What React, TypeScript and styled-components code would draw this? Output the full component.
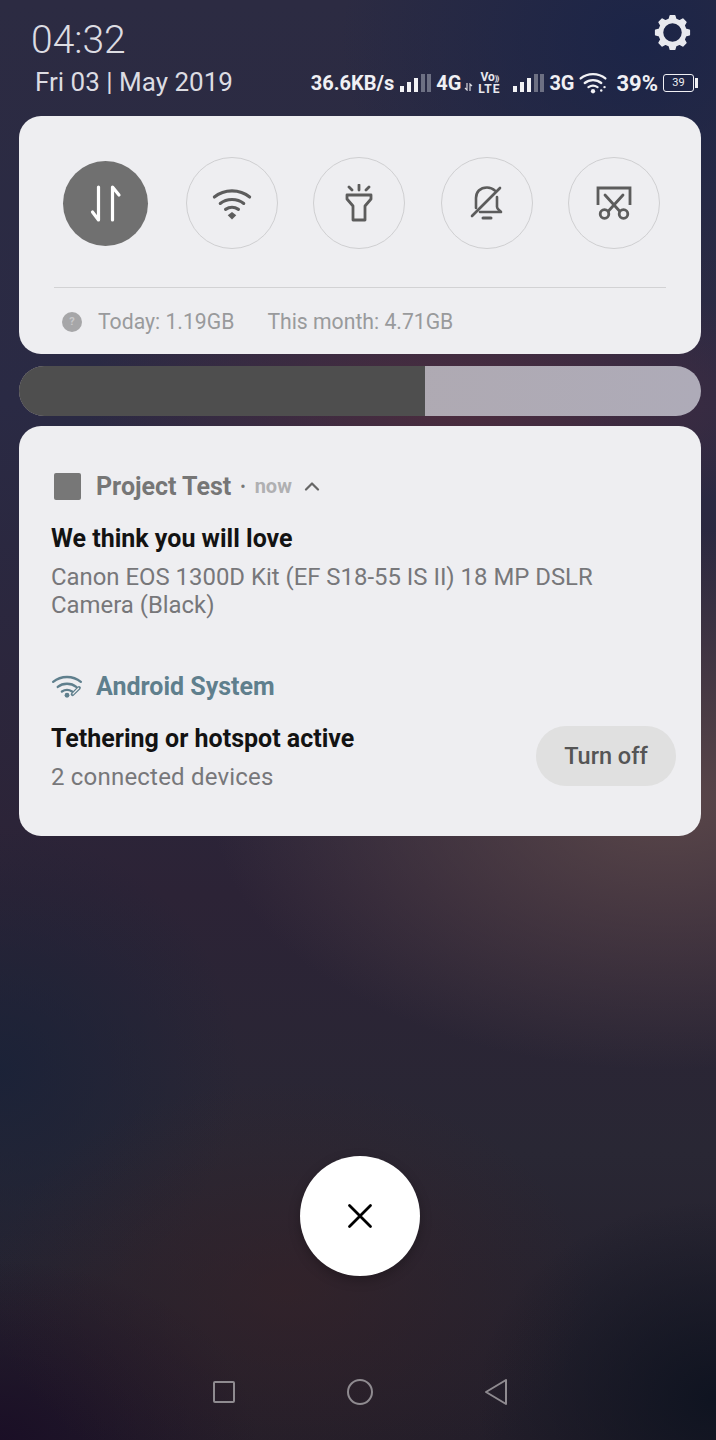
import styled, { createGlobalStyle } from 'styled-components';

const GlobalStyle = createGlobalStyle`
  html, body {
    margin: 0;
    padding: 0;
    background: #23233a;
  }
  * {
    box-sizing: border-box;
  }
`;

// eight teeth round a centre of 12,12, in the gear's 24 unit box
const gearOutline = Array.from({ length: 8 }, (_, i) => {
  const centre = (i * Math.PI) / 4;
  const point = (radius: number, offset: number) => {
    const angle = centre + offset;
    return `${(12 + radius * Math.cos(angle)).toFixed(2)} ${(12 + radius * Math.sin(angle)).toFixed(2)}`;
  };
  return `${point(8.8, -0.24)}L${point(11, -0.13)}L${point(11, 0.13)}L${point(8.8, 0.24)}`;
}).join('L');

const gearPath = `M${gearOutline}ZM12 5.5a6.5 6.5 0 1 0 0 13 6.5 6.5 0 0 0 0-13Z`;

const SignalBars = () => (
  <svg width="32" height="20" viewBox="0 0 32 20">
    <rect x="1" y="13" width="4" height="6" fill="#f2f2f5" />
    <rect x="8" y="9" width="4" height="10" fill="#f2f2f5" />
    <rect x="15" y="5" width="4" height="14" fill="#f2f2f5" />
    <rect x="22" y="1" width="4" height="18" fill="#6d7083" />
    <rect x="28" y="1" width="4" height="18" fill="#6d7083" />
  </svg>
);

const WifiArcs = ({ color, width }: { color: string; width: number }) => (
  <>
    <path d="M2 8.5C10.5 1.5 23.5 1.5 32 8.5" fill="none" stroke={color} strokeWidth={width} strokeLinecap="round" />
    <path d="M7 14C12.5 9.5 21.5 9.5 27 14" fill="none" stroke={color} strokeWidth={width} strokeLinecap="round" />
    <path d="M11.5 19C14.8 16.8 19.2 16.8 22.5 19" fill="none" stroke={color} strokeWidth={width} strokeLinecap="round" />
  </>
);

const App = () => {
  const toggles = [
    <svg key="wifi" width="40" height="33" viewBox="0 0 34 28">
      <WifiArcs color="#5c5c5c" width={2.6} />
      <path d="M17 27.5l-3.6-3.6 3.6-2.6 3.6 2.6z" fill="#5c5c5c" />
    </svg>,
    <svg key="torch" width="30" height="38" viewBox="0 0 30 38" fill="none" stroke="#5c5c5c" strokeWidth="2.8" strokeLinecap="round" strokeLinejoin="round">
      <path d="M15 1v5M5 3l3 3M25 3l-3 3" />
      <path d="M3 11h24v4l-6 7v14H9V22l-6-7z" />
    </svg>,
    <svg key="bell" width="34" height="36" viewBox="0 0 34 36" fill="none" stroke="#5c5c5c" strokeWidth="2.6" strokeLinecap="round" strokeLinejoin="round">
      <path d="M6 23V13C6 7 10 2.5 17 2.5c3.5 0 6 1.2 8 3.2M27 12v10c0 2 2 3 4 5H10" />
      <path d="M2 31L30 3" />
      <path d="M13 33h8" strokeWidth="3" />
    </svg>,
    <svg key="cut" width="36" height="34" viewBox="0 0 36 34" fill="none" stroke="#5c5c5c" strokeWidth="2.8" strokeLinecap="round">
      <path d="M2 19V2h32v17" strokeLinecap="butt" />
      <path d="M9 9l14.5 16M27 9L12.5 25" />
      <circle cx="8.5" cy="28" r="4.3" />
      <circle cx="27.5" cy="28" r="4.3" />
    </svg>,
  ];

  return (
    <Screen>
      <GlobalStyle />
      <Header>
        <ClockColumn>
          <Clock>04:32</Clock>
          <DateLine>Fri 03 | May 2019</DateLine>
        </ClockColumn>
        <HeaderRight>
          <SettingsIcon viewBox="0 0 24 24" width="37" height="37">
            <path fill="#e8e9ee" stroke="#e8e9ee" strokeWidth="1" strokeLinejoin="round" fillRule="evenodd" d={gearPath} />
          </SettingsIcon>
          <StatusBar>
            <StatusText>36.6KB/s</StatusText>
            <SignalBars />
            <StatusText>4G</StatusText>
            <TinyArrows width="9" height="8" viewBox="0 0 9 8" fill="none" stroke="#d8d8de" strokeWidth="1.2">
              <path d="M3 0v7L1 5M6 8V1l2 2" />
            </TinyArrows>
            <VoLte>
              <VoLine>
                Vo<VoWaves>))</VoWaves>
              </VoLine>
              <LteLine>LTE</LteLine>
            </VoLte>
            <SignalBars />
            <StatusText>3G</StatusText>
            <svg width="28" height="24" viewBox="0 0 34 28">
              <WifiArcs color="#f2f2f5" width={2.8} />
              <circle cx="17" cy="24" r="2.6" fill="#f2f2f5" />
              <circle cx="27" cy="23" r="1.5" fill="#f2f2f5" />
              <circle cx="31" cy="19" r="1.5" fill="#f2f2f5" />
            </svg>
            <Percent>39%</Percent>
            <Battery>
              <BatteryBody>39</BatteryBody>
              <BatteryCap />
            </Battery>
          </StatusBar>
        </HeaderRight>
      </Header>

      <TogglesPanel>
        <ToggleRow>
          <ActiveToggle>
            <svg width="32" height="38" viewBox="0 0 32 38" fill="none" stroke="#fff" strokeWidth="3.2" strokeLinecap="round" strokeLinejoin="round">
              <path d="M8.5 3v33l-6-8" />
              <path d="M22.5 36V3l6.5 8" />
            </svg>
          </ActiveToggle>
          {toggles.map((icon) => (
            <Toggle key={icon.key}>{icon}</Toggle>
          ))}
        </ToggleRow>
        <Divider />
        <UsageRow>
          <HelpDot>?</HelpDot>
          <UsageText>Today: 1.19GB</UsageText>
          <UsageText>This month: 4.71GB</UsageText>
        </UsageRow>
      </TogglesPanel>

      <Brightness>
        <BrightnessFill style={{ width: `${(406 / 682) * 100}%` }} />
      </Brightness>

      <NotificationPanel>
        <AppRow>
          <AppSquare />
          <AppName>Project Test</AppName>
          <Dot>•</Dot>
          <When>now</When>
          <svg width="16" height="10" viewBox="0 0 16 10" fill="none" stroke="#666" strokeWidth="2.2" strokeLinecap="round" strokeLinejoin="round">
            <path d="M2 8.5l6-6 6 6" />
          </svg>
        </AppRow>
        <LoveTitle>We think you will love</LoveTitle>
        <NotifBody>Canon EOS 1300D Kit (EF S18-55 IS II) 18 MP DSLR Camera (Black)</NotifBody>

        <SystemRow>
          <svg width="32" height="24" viewBox="0 0 34 26">
            <WifiArcs color="#5f7f8d" width={2.6} />
            <circle cx="17" cy="23" r="2.6" fill="#5f7f8d" />
            <path d="M23 22l7-7" stroke="#5f7f8d" strokeWidth="4" strokeLinecap="round" />
            <path d="M23.5 21.5l6-6" stroke="#eeeef0" strokeWidth="1.4" strokeLinecap="round" />
          </svg>
          <SystemName>Android System</SystemName>
        </SystemRow>
        <TetherRow>
          <div>
            <NotifTitle>Tethering or hotspot active</NotifTitle>
            <TetherBody>2 connected devices</TetherBody>
          </div>
          <TurnOff>Turn off</TurnOff>
        </TetherRow>
      </NotificationPanel>

      <CloseButton>
        <svg width="26" height="26" viewBox="0 0 26 26" fill="none" stroke="#000" strokeWidth="2.8" strokeLinecap="round">
          <path d="M2.5 2.5l21 21M23.5 2.5l-21 21" />
        </svg>
      </CloseButton>

      <NavBar>
        <svg width="22" height="22" viewBox="0 0 22 22" fill="none" stroke="#8f8b90" strokeWidth="2">
          <rect x="1" y="1" width="20" height="20" rx="1" />
        </svg>
        <svg width="26" height="26" viewBox="0 0 26 26" fill="none" stroke="#8f8b90" strokeWidth="2">
          <circle cx="13" cy="13" r="12" />
        </svg>
        <svg width="22" height="26" viewBox="0 0 22 26" fill="none" stroke="#8f8b90" strokeWidth="2" strokeLinejoin="round">
          <path d="M21 1v24L1 13z" />
        </svg>
      </NavBar>
    </Screen>
  );
};

const Screen = styled.div`
  width: 716px;
  height: 1440px;
  padding-left: 4px;
  overflow: hidden;
  display: flex;
  flex-direction: column;
  align-items: center;
  font-family: Roboto, "Liberation Sans", sans-serif;
  background:
    radial-gradient(ellipse 460px 270px at 670px 800px, rgba(92, 72, 74, 0.95), rgba(80, 52, 60, 0) 100%),
    radial-gradient(ellipse 300px 210px at 290px 1290px, rgba(58, 34, 38, 0.55), rgba(58, 34, 38, 0) 100%),
    radial-gradient(ellipse 240px 200px at 716px 1400px, rgba(14, 19, 32, 0.95), rgba(14, 19, 32, 0) 100%),
    radial-gradient(ellipse 260px 180px at 0 1440px, rgba(26, 14, 38, 0.95), rgba(26, 14, 38, 0) 100%),
    radial-gradient(ellipse 240px 240px at 0 1070px, rgba(26, 34, 56, 0.9), rgba(26, 34, 56, 0) 100%),
    radial-gradient(ellipse 380px 130px at 460px 400px, rgba(90, 45, 60, 0.75), rgba(90, 45, 60, 0) 100%),
    radial-gradient(ellipse 300px 260px at 640px 40px, rgba(26, 36, 72, 0.9), rgba(26, 36, 72, 0) 100%),
    linear-gradient(180deg, #2c2b42 0%, #2a2a44 28%, #2c2336 62%, #292734 80%, #231e2a 100%);
`;

const Header = styled.header`
  width: 100%;
  height: 116px;
  display: flex;
  justify-content: space-between;
  align-items: flex-start;
  padding: 18px 19px 0 27px;
`;

const ClockColumn = styled.div`
  display: flex;
  flex-direction: column;
`;

const Clock = styled.div`
  font-size: 39px;
  font-weight: 300;
  line-height: 44px;
  color: #dcdce2;
`;

const DateLine = styled.div`
  margin: 4px 0 0 4px;
  font-size: 26px;
  line-height: 32px;
  color: #dcdce2;
`;

const HeaderRight = styled.div`
  display: flex;
  flex-direction: column;
  align-items: flex-end;
  margin-top: -4px;
`;

const SettingsIcon = styled.svg`
  margin-right: 6px;
`;

const StatusBar = styled.div`
  display: flex;
  align-items: center;
  gap: 5px;
  height: 30px;
  margin-top: 17px;
  margin-right: -1px;
`;

const StatusText = styled.span`
  font-size: 20px;
  font-weight: 700;
  color: #f0f0f4;
`;

const Percent = styled(StatusText)`
  font-size: 22px;
  margin-left: 4px;
`;

const TinyArrows = styled.svg`
  margin: 8px 0 0 -2px;
`;

const VoLte = styled.div`
  display: flex;
  flex-direction: column;
  align-items: center;
  width: 22px;
  margin-right: 7px;
  font-size: 12px;
  font-weight: 700;
  line-height: 11px;
  color: #e8e8ee;
`;

const VoLine = styled.span`
  white-space: nowrap;
`;

const VoWaves = styled.span`
  font-size: 8px;
  letter-spacing: -1px;
`;

const LteLine = styled.span`
  letter-spacing: 1px;
`;

const Battery = styled.div`
  display: flex;
  align-items: center;
  gap: 1px;
`;

const BatteryBody = styled.div`
  width: 31px;
  height: 18px;
  border: 1.5px solid #f0f0f4;
  border-radius: 3px;
  font-size: 11px;
  line-height: 15px;
  text-align: center;
  color: #f0f0f4;
`;

const BatteryCap = styled.div`
  width: 3px;
  height: 10px;
  background: #f0f0f4;
`;

const Panel = styled.section`
  width: 682px;
  border-radius: 22px;
  background: #eeeef1;
`;

const TogglesPanel = styled(Panel)`
  height: 238px;
  padding: 41px 35px 0;
`;

const ToggleRow = styled.div`
  display: flex;
  align-items: center;
  gap: 35.4px;
  height: 92px;
  padding-left: 9px;
`;

const ActiveToggle = styled.div`
  width: 85px;
  height: 85px;
  margin-right: 2.5px;
  border-radius: 50%;
  display: flex;
  align-items: center;
  justify-content: center;
  background: #707070;
`;

const Toggle = styled.div`
  width: 92px;
  height: 92px;
  border-radius: 50%;
  display: flex;
  align-items: center;
  justify-content: center;
  border: 1px solid #cfcfd1;
`;

const Divider = styled.div`
  height: 1px;
  width: 612px;
  margin-top: 38px;
  background: #d2d2d4;
`;

const UsageRow = styled.div`
  display: flex;
  align-items: center;
  margin-top: 20px;
  padding-left: 8px;
`;

const HelpDot = styled.div`
  width: 20px;
  height: 20px;
  margin-right: 16px;
  border-radius: 50%;
  font-size: 11px;
  font-weight: 700;
  line-height: 20px;
  text-align: center;
  color: #c8c8ca;
  background: #a6a6a8;
`;

const UsageText = styled.span`
  margin-right: 33px;
  font-size: 21.2px;
  line-height: 28px;
  color: #999a9c;
`;

const Brightness = styled.div`
  width: 682px;
  height: 50px;
  margin-top: 12px;
  border-radius: 25px;
  overflow: hidden;
  background: linear-gradient(90deg, #b0a8ab, #aeabb8);
`;

const BrightnessFill = styled.div`
  height: 100%;
  background: #4e4e4e;
`;

const NotificationPanel = styled(Panel)`
  height: 410px;
  margin-top: 10px;
  padding: 44px 25px 0 32px;
`;

const AppRow = styled.div`
  display: flex;
  align-items: center;
  height: 32px;
  padding-left: 3px;
`;

const AppSquare = styled.div`
  width: 27px;
  height: 27px;
  margin-right: 15px;
  border-radius: 2px;
  background: #777;
`;

const AppName = styled.span`
  font-size: 25px;
  font-weight: 700;
  color: #767676;
`;

const Dot = styled.span`
  margin: 0 9px;
  font-size: 16px;
  color: #777;
`;

const When = styled.span`
  margin-right: 12px;
  font-size: 20px;
  font-weight: 700;
  color: #b0b0b2;
`;

const NotifTitle = styled.div`
  padding-top: 1px;
  font-size: 25px;
  font-weight: 700;
  line-height: 32px;
  color: #131313;
`;

const LoveTitle = styled(NotifTitle)`
  margin-top: 20px;
`;

const NotifBody = styled.div`
  width: 600px;
  margin-top: 8px;
  font-size: 23.9px;
  line-height: 28px;
  color: #77777a;
`;

const SystemRow = styled.div`
  display: flex;
  align-items: center;
  gap: 13px;
  height: 32px;
  margin-top: 51px;
`;

const SystemName = styled.span`
  font-size: 25px;
  font-weight: 700;
  color: #5f7f8d;
`;

const TetherRow = styled.div`
  display: flex;
  align-items: flex-start;
  justify-content: space-between;
  margin-top: 20px;
`;

const TetherBody = styled.div`
  margin-top: 7px;
  font-size: 24px;
  letter-spacing: 0.2px;
  line-height: 30px;
  color: #77777a;
`;

const TurnOff = styled.button`
  width: 140px;
  height: 60px;
  margin-top: 4px;
  padding: 0;
  border: 0;
  border-radius: 30px;
  font-family: inherit;
  font-size: 23.5px;
  font-weight: 500;
  color: #555;
  background: #e0e0e0;
`;

const CloseButton = styled.div`
  width: 120px;
  height: 120px;
  margin-top: 320px;
  border-radius: 50%;
  display: flex;
  align-items: center;
  justify-content: center;
  background: #fff;
  box-shadow: 0 4px 12px rgba(0, 0, 0, 0.25);
`;

const NavBar = styled.nav`
  width: 294px;
  height: 26px;
  margin-top: 103px;
  display: flex;
  align-items: center;
  justify-content: space-between;
`;

export default App;
